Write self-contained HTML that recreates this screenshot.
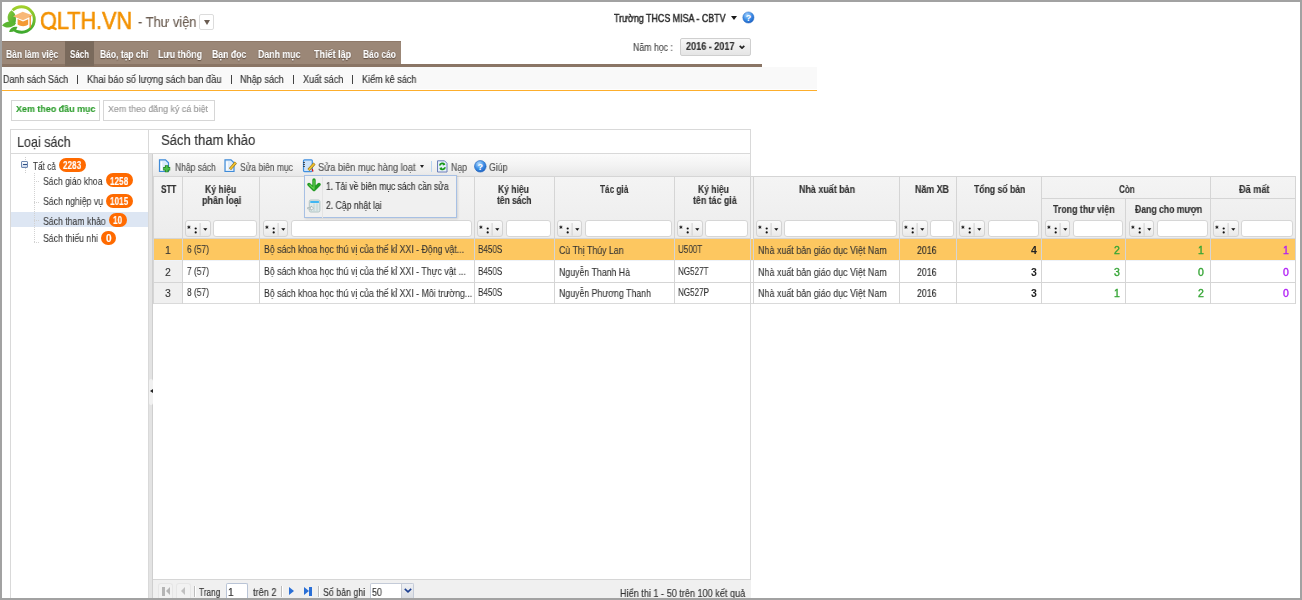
<!DOCTYPE html>
<html><head><meta charset="utf-8">
<style>
*{margin:0;padding:0;box-sizing:border-box}
html,body{width:1302px;height:600px;overflow:hidden;background:#fff}
body{position:relative;font-family:"Liberation Sans",sans-serif;color:#333}
.a{position:absolute;white-space:nowrap}
.t{will-change:transform}
.mi{text-shadow:0 0 1px rgba(60,45,35,.9),0 1px 1px rgba(60,45,35,.6)}
.fb{border:1px solid #d3d3d3;border-radius:3px;background:linear-gradient(#fbfbfb,#f3f3f3 50%,#e9e9e9)}
.fi{border:1px solid #d6d6d6;border-radius:3px;background:#fff}
</style></head><body>
<svg class="a" style="left:0;top:0" width="40" height="40" viewBox="0 0 40 40">
 <defs><linearGradient id="lg" x1="0" y1="0" x2="0" y2="1"><stop offset="0" stop-color="#a2d02c"/><stop offset="1" stop-color="#3ea92e"/></linearGradient>
 <linearGradient id="lf" x1="0" y1="0" x2="1" y2="1"><stop offset="0" stop-color="#8ccc3a"/><stop offset="1" stop-color="#3fa833"/></linearGradient></defs>
 <path d="M12.6 10.3 A12.8 12.8 0 1 1 12.9 29" fill="none" stroke="url(#lg)" stroke-width="2.9"/>
 <path d="M11.5 10.2 C16.5 13.5 17 20 14.5 25.5 C7 24 5 15 11.5 10.2Z" fill="url(#lf)"/>
 <path d="M2 25.5 C5.5 21 11.5 20.5 16 23.5 C12 28.5 6 28.5 2 25.5Z" fill="#5bb632"/>
 <path d="M9 31.8 C10.5 27.5 14 26 17.5 27 C16 31 12.5 32.5 9 31.8Z" fill="#4aac30"/>
 <path d="M13 16.2 L22.7 11.8 L33 15.6 L23 20.2Z" fill="#f8b878"/>
 <path d="M17.6 19 L17.6 24.6 C20.8 26.8 25.6 26.8 28.2 24.6 L28.2 19.2 L23 21.6Z" fill="#f39a34"/>
 <path d="M30.2 16 V27.8" stroke="#f08a1e" stroke-width="1.3"/>
</svg>
<div class="a t " style="left:40.00px;top:9.17px;font-size:24px;line-height:24px;color:#f39200;transform-origin:0 0;transform:scaleX(0.8998);-webkit-text-stroke:0.6px #f39200;">QLTH.VN</div>
<div class="a" style="left:44px;top:30px;width:16px;height:7px;background:#fff"></div>
<svg class="a" style="left:44px;top:22px" width="16" height="10" viewBox="0 0 16 10"><path d="M7.2 5 L11.6 6.9" stroke="#f39200" stroke-width="2.4" stroke-linecap="round"/></svg>
<div class="a t " style="left:138.00px;top:13.88px;font-size:15.5px;line-height:15.5px;color:#6b5d52;transform-origin:0 0;transform:scaleX(0.8299);-webkit-text-stroke:0.15px #6b5d52;">- Thư viện</div>
<div class="a" style="left:199px;top:14px;width:15px;height:16px;border:1px solid #dcdcdc;border-radius:2px;background:#fff"></div>
<div class="a" style="left:203.5px;top:19.5px;width:0;height:0;border-left:3.3px solid transparent;border-right:3.3px solid transparent;border-top:5px solid #6b5d52"></div>
<div class="a t " style="left:614.40px;top:13.03px;font-size:10.5px;line-height:10.5px;color:#2a2a2a;transform-origin:0 0;transform:scaleX(0.8469);-webkit-text-stroke:0.45px #2a2a2a;">Trường THCS MISA - CBTV</div>
<div class="a" style="left:730.6px;top:15.5px;width:0;height:0;border-left:3.1px solid transparent;border-right:3.1px solid transparent;border-top:4px solid #1a1a1a"></div>
<svg class="a" style="left:742px;top:11.3px" width="13" height="13" viewBox="0 0 13 13">
<defs><radialGradient id="hg" cx="0.4" cy="0.3" r="0.7"><stop offset="0" stop-color="#a7d3ff"/><stop offset="0.6" stop-color="#3b8ce6"/><stop offset="1" stop-color="#1e63c4"/></radialGradient></defs>
<circle cx="6.4" cy="6.5" r="5.6" fill="url(#hg)" stroke="#2a6ac0" stroke-width="0.5"/>
<text x="6.5" y="10" text-anchor="middle" font-family="Liberation Sans" font-weight="bold" font-size="9" fill="#fff">?</text></svg>
<div class="a t " style="left:632.60px;top:43.09px;font-size:10px;line-height:10px;color:#444;transform-origin:0 0;transform:scaleX(0.8750);-webkit-text-stroke:0.1px #444;">Năm học :</div>
<div class="a" style="left:679.5px;top:37.5px;width:71.5px;height:18px;border:1px solid #cfcfcf;border-radius:2px;background:linear-gradient(#f8f8f8,#e5e5e5)"></div>
<div class="a t " style="left:686.00px;top:42.46px;font-size:10.3px;line-height:10.3px;font-weight:bold;color:#333;transform-origin:0 0;transform:scaleX(0.8818);-webkit-text-stroke:0.15px #333;">2016 - 2017</div>
<svg class="a" style="left:739px;top:45px" width="6" height="4" viewBox="0 0 6 4"><path d="M0.7 0.8 L3 3.1 L5.3 0.8" fill="none" stroke="#222" stroke-width="1.7"/></svg>
<div class="a" style="left:2px;top:41px;width:399px;height:23px;background:#9b8777;border-top:1px solid #8f7a6a"></div>
<div class="a" style="left:2px;top:64px;width:760px;height:3px;background:#8a7565"></div>
<div class="a" style="left:64.5px;top:41px;width:29.5px;height:25px;background:#7a6a5c"></div>
<div class="a t mi" style="left:5.80px;top:48.79px;font-size:10.8px;line-height:10.8px;font-weight:bold;color:#fff;transform-origin:0 0;transform:scaleX(0.7911);-webkit-text-stroke:0.15px #fff;">Bàn làm việc</div>
<div class="a t mi" style="left:70.00px;top:48.79px;font-size:10.8px;line-height:10.8px;font-weight:bold;color:#fff;transform-origin:0 0;transform:scaleX(0.7361);-webkit-text-stroke:0.15px #fff;">Sách</div>
<div class="a t mi" style="left:99.50px;top:48.79px;font-size:10.8px;line-height:10.8px;font-weight:bold;color:#fff;transform-origin:0 0;transform:scaleX(0.7878);-webkit-text-stroke:0.15px #fff;">Báo, tạp chí</div>
<div class="a t mi" style="left:158.00px;top:48.79px;font-size:10.8px;line-height:10.8px;font-weight:bold;color:#fff;transform-origin:0 0;transform:scaleX(0.8148);-webkit-text-stroke:0.15px #fff;">Lưu thông</div>
<div class="a t mi" style="left:211.50px;top:48.79px;font-size:10.8px;line-height:10.8px;font-weight:bold;color:#fff;transform-origin:0 0;transform:scaleX(0.8037);-webkit-text-stroke:0.15px #fff;">Bạn đọc</div>
<div class="a t mi" style="left:258.00px;top:48.79px;font-size:10.8px;line-height:10.8px;font-weight:bold;color:#fff;transform-origin:0 0;transform:scaleX(0.8128);-webkit-text-stroke:0.15px #fff;">Danh mục</div>
<div class="a t mi" style="left:313.70px;top:48.79px;font-size:10.8px;line-height:10.8px;font-weight:bold;color:#fff;transform-origin:0 0;transform:scaleX(0.8358);-webkit-text-stroke:0.15px #fff;">Thiết lập</div>
<div class="a t mi" style="left:363.00px;top:48.79px;font-size:10.8px;line-height:10.8px;font-weight:bold;color:#fff;transform-origin:0 0;transform:scaleX(0.7807);-webkit-text-stroke:0.15px #fff;">Báo cáo</div>
<div class="a" style="left:3px;top:67px;width:814px;height:21.6px;background:#f9f9f9"></div>
<div class="a" style="left:2px;top:89.8px;width:815px;height:1.3px;background:#fdae2c"></div>
<div class="a t " style="left:2.70px;top:74.80px;font-size:10px;line-height:10px;color:#333;transform-origin:0 0;transform:scaleX(0.8896);-webkit-text-stroke:0.15px #333;">Danh sách Sách</div>
<div class="a t " style="left:86.90px;top:74.80px;font-size:10px;line-height:10px;color:#333;transform-origin:0 0;transform:scaleX(0.9269);-webkit-text-stroke:0.15px #333;">Khai báo số lượng sách ban đầu</div>
<div class="a t " style="left:240.00px;top:74.80px;font-size:10px;line-height:10px;color:#333;transform-origin:0 0;transform:scaleX(0.9142);-webkit-text-stroke:0.15px #333;">Nhập sách</div>
<div class="a t " style="left:302.60px;top:74.80px;font-size:10px;line-height:10px;color:#333;transform-origin:0 0;transform:scaleX(0.9056);-webkit-text-stroke:0.15px #333;">Xuất sách</div>
<div class="a t " style="left:361.60px;top:74.80px;font-size:10px;line-height:10px;color:#333;transform-origin:0 0;transform:scaleX(0.9050);-webkit-text-stroke:0.15px #333;">Kiểm kê sách</div>
<div class="a" style="left:77.2px;top:75px;width:1px;height:9px;background:#444"></div>
<div class="a" style="left:230.5px;top:75px;width:1px;height:9px;background:#444"></div>
<div class="a" style="left:292.9px;top:75px;width:1px;height:9px;background:#444"></div>
<div class="a" style="left:351.6px;top:75px;width:1px;height:9px;background:#444"></div>
<div class="a" style="left:11px;top:100px;width:89px;height:20.5px;border:1px solid #d6d6d6;background:#fff"></div>
<div class="a" style="left:103px;top:100px;width:112px;height:20.5px;border:1px solid #d6d6d6;background:#fff"></div>
<div class="a t " style="left:16.00px;top:104.23px;font-size:9.75px;line-height:9.75px;font-weight:bold;color:#2f9e2f;transform-origin:0 0;transform:scaleX(0.9160);-webkit-text-stroke:0.15px #2f9e2f;">Xem theo đầu mục</div>
<div class="a t " style="left:107.80px;top:104.23px;font-size:9.75px;line-height:9.75px;color:#999;transform-origin:0 0;transform:scaleX(0.9085);-webkit-text-stroke:0.15px #999;">Xem theo đăng ký cá biệt</div>
<div class="a" style="left:10px;top:129px;width:139.5px;height:470px;border:1px solid #d9d9d9;border-bottom:none;background:#fff"></div>
<div class="a" style="left:10px;top:153px;width:139.5px;height:1px;background:#d9d9d9"></div>
<div class="a t " style="left:17.00px;top:133.94px;font-size:15px;line-height:15px;color:#333;transform-origin:0 0;transform:scaleX(0.8364);-webkit-text-stroke:0.15px #333;">Loại sách</div>
<div class="a" style="left:148px;top:129px;width:603px;height:470px;border:1px solid #d9d9d9;border-bottom:none;background:#fff"></div>
<div class="a" style="left:148px;top:153px;width:603px;height:1px;background:#d9d9d9"></div>
<div class="a t " style="left:160.70px;top:131.89px;font-size:15.4px;line-height:15.4px;color:#333;transform-origin:0 0;transform:scaleX(0.8478);-webkit-text-stroke:0.15px #333;">Sách tham khảo</div>
<div class="a" style="left:148.5px;top:154px;width:4.5px;height:444px;background:#e3e3e3;border-right:1px solid #cfcfcf"></div>
<div class="a" style="left:149px;top:379px;width:4px;height:26px;background:#f1f1f1;border-radius:2px"></div>
<div class="a" style="left:150px;top:388.5px;width:0;height:0;border-top:2.5px solid transparent;border-bottom:2.5px solid transparent;border-right:3px solid #222"></div>
<div class="a" style="left:11px;top:211.8px;width:137px;height:15px;background:#dde6f3"></div>
<div class="a" style="left:24.5px;top:157px;width:1px;height:5px;border-left:1px dotted #cfcfcf"></div>
<div class="a" style="left:24.5px;top:168px;width:1px;height:5px;border-left:1px dotted #cfcfcf"></div>
<div class="a" style="left:33.5px;top:173px;width:1px;height:69px;border-left:1px dotted #d2d2d2"></div>
<div class="a" style="left:34px;top:181.2px;width:5px;height:1px;border-top:1px dotted #d2d2d2"></div>
<div class="a" style="left:34px;top:201.5px;width:5px;height:1px;border-top:1px dotted #d2d2d2"></div>
<div class="a" style="left:34px;top:220px;width:5px;height:1px;border-top:1px dotted #d2d2d2"></div>
<div class="a" style="left:34px;top:241.5px;width:5px;height:1px;border-top:1px dotted #d2d2d2"></div>
<div class="a" style="left:21.2px;top:161.2px;width:7.2px;height:7.2px;border:1px solid #6f88b0;border-radius:1px;background:linear-gradient(#fdfdfd,#c9d6ea)"></div>
<div class="a" style="left:23px;top:164.4px;width:3.6px;height:1px;background:#2d4f85"></div>
<div class="a t " style="left:32.50px;top:160.66px;font-size:11px;line-height:11px;color:#3a3a3a;transform-origin:0 0;transform:scaleX(0.7456);-webkit-text-stroke:0.1px #3a3a3a;">Tất cả</div>
<div class="a" style="left:58.7px;top:157.5px;width:27.1px;height:14.2px;background:#ff6a00;border-radius:8px"></div>
<div class="a t " style="left:63.15px;top:160.89px;font-size:10px;line-height:10px;font-weight:bold;color:#fff;transform-origin:0 0;transform:scaleX(0.8198);-webkit-text-stroke:0.15px #fff;">2283</div>
<div class="a t " style="left:43.00px;top:175.96px;font-size:11px;line-height:11px;color:#3a3a3a;transform-origin:0 0;transform:scaleX(0.7839);-webkit-text-stroke:0.1px #3a3a3a;">Sách giáo khoa</div>
<div class="a" style="left:105.8px;top:173.3px;width:27.2px;height:14.2px;background:#ff6a00;border-radius:8px"></div>
<div class="a t " style="left:110.30px;top:176.69px;font-size:10px;line-height:10px;font-weight:bold;color:#fff;transform-origin:0 0;transform:scaleX(0.8198);-webkit-text-stroke:0.15px #fff;">1258</div>
<div class="a t " style="left:43.00px;top:196.26px;font-size:11px;line-height:11px;color:#3a3a3a;transform-origin:0 0;transform:scaleX(0.7917);-webkit-text-stroke:0.1px #3a3a3a;">Sách nghiệp vụ</div>
<div class="a" style="left:105.8px;top:193.5px;width:27.2px;height:14.3px;background:#ff6a00;border-radius:8px"></div>
<div class="a t " style="left:110.30px;top:196.94px;font-size:10px;line-height:10px;font-weight:bold;color:#fff;transform-origin:0 0;transform:scaleX(0.8198);-webkit-text-stroke:0.15px #fff;">1015</div>
<div class="a t " style="left:43.00px;top:215.96px;font-size:11px;line-height:11px;color:#3a3a3a;transform-origin:0 0;transform:scaleX(0.7896);-webkit-text-stroke:0.1px #3a3a3a;">Sách tham khảo</div>
<div class="a" style="left:109px;top:212.5px;width:17.5px;height:14.0px;background:#ff6a00;border-radius:8px"></div>
<div class="a t " style="left:113.20px;top:215.79px;font-size:10px;line-height:10px;font-weight:bold;color:#fff;transform-origin:0 0;transform:scaleX(0.8198);-webkit-text-stroke:0.15px #fff;">10</div>
<div class="a t " style="left:43.00px;top:233.46px;font-size:11px;line-height:11px;color:#3a3a3a;transform-origin:0 0;transform:scaleX(0.7886);-webkit-text-stroke:0.1px #3a3a3a;">Sách thiếu nhi</div>
<div class="a" style="left:101.2px;top:231px;width:14.6px;height:14px;background:#ff6a00;border-radius:8px"></div>
<div class="a t " style="left:106.20px;top:234.29px;font-size:10px;line-height:10px;font-weight:bold;color:#fff;-webkit-text-stroke:0.15px #fff;">0</div>
<div class="a" style="left:153px;top:154px;width:597px;height:22px;background:linear-gradient(#fbfbfb,#f3f3f3 50%,#e8e8e8)"></div>
<svg class="a" style="left:158px;top:159px" width="14" height="14" viewBox="0 0 14 14">
<path d="M1.5 0.8 H7.5 L10.5 3.8 V12.5 H1.5Z" fill="#dcebfa" stroke="#3f8bd8" stroke-width="1.2"/>
<path d="M3.5 2.5 V11" stroke="#fff" stroke-width="1.5"/>
<path d="M8.7 6.2 V13.2 M5.2 9.7 H12.2" stroke="#1d7a1d" stroke-width="3.6"/>
<path d="M8.7 6.6 V12.8 M5.6 9.7 H11.8" stroke="#4cc04c" stroke-width="2"/>
</svg>
<svg class="a" style="left:224px;top:159px" width="14" height="14" viewBox="0 0 14 14">
<path d="M1 0.8 H7 L10 3.8 V12.5 H1Z" fill="#dcebfa" stroke="#3f8bd8" stroke-width="1.2"/>
<path d="M3 2.5 V11" stroke="#fff" stroke-width="1.5"/>
<path d="M11.8 3.5 L6 10.2" stroke="#8a6a10" stroke-width="2.8"/>
<path d="M11.6 3.7 L6.2 10" stroke="#f2c22e" stroke-width="1.8"/>
</svg>
<svg class="a" style="left:302px;top:159px" width="14" height="14" viewBox="0 0 14 14">
<rect x="1.5" y="0.8" width="8.8" height="11.8" rx="1" fill="#cfe4fa" stroke="#3f8fe0" stroke-width="1.2"/>
<path d="M1 3.5 H3 M1 5.5 H3 M1 7.5 H3" stroke="#333" stroke-width="0.8"/>
<path d="M12.5 4.5 L6.5 11" stroke="#8a6a10" stroke-width="2.8"/>
<path d="M12.3 4.7 L6.7 10.8" stroke="#f0c030" stroke-width="1.8"/>
<path d="M10.2 10 L11 12.5" stroke="#e01010" stroke-width="1.2"/>
</svg>
<div class="a" style="left:419.7px;top:165px;width:0;height:0;border-left:2px solid transparent;border-right:2px solid transparent;border-top:3px solid #222"></div>
<div class="a" style="left:431.3px;top:161.2px;width:1px;height:11px;background:#b8d4f0"></div>
<svg class="a" style="left:436px;top:160px" width="13" height="13" viewBox="0 0 13 13">
<path d="M1.5 0.8 H8.5 L11 3.3 V12 H1.5Z" fill="#e6f0fb" stroke="#6c7fb8" stroke-width="1"/>
<path d="M3.8 5.5 C4 3 7.5 2.8 8.5 4.5 M9 7.3 C8.8 9.8 5.3 10 4.3 8.3" fill="none" stroke="#1a9a1a" stroke-width="1.8"/>
<path d="M7 2.5 L9.5 4.8 L6.8 5.5Z M5.8 10.3 L3.3 8 L6 7.3Z" fill="#1a9a1a"/>
</svg>
<svg class="a" style="left:473.5px;top:160px" width="13" height="13" viewBox="0 0 13 13">
<defs><radialGradient id="hg2" cx="0.4" cy="0.3" r="0.75"><stop offset="0" stop-color="#b5dcff"/><stop offset="0.55" stop-color="#3d8fe6"/><stop offset="1" stop-color="#1c5fc0"/></radialGradient></defs>
<circle cx="6.3" cy="6.3" r="5.8" fill="url(#hg2)" stroke="#2262b8" stroke-width="0.6"/>
<text x="6.3" y="9.8" text-anchor="middle" font-family="Liberation Sans" font-weight="bold" font-size="9" fill="#fff">?</text></svg>
<div class="a t " style="left:174.90px;top:162.59px;font-size:10px;line-height:10px;color:#555;transform-origin:0 0;transform:scaleX(0.8536);-webkit-text-stroke:0.15px #555;">Nhập sách</div>
<div class="a t " style="left:239.60px;top:162.59px;font-size:10px;line-height:10px;color:#555;transform-origin:0 0;transform:scaleX(0.8491);-webkit-text-stroke:0.15px #555;">Sửa biên mục</div>
<div class="a t " style="left:317.80px;top:162.59px;font-size:10px;line-height:10px;color:#555;transform-origin:0 0;transform:scaleX(0.9181);-webkit-text-stroke:0.15px #555;">Sửa biên mục hàng loạt</div>
<div class="a t " style="left:451.00px;top:162.59px;font-size:10px;line-height:10px;color:#555;transform-origin:0 0;transform:scaleX(0.8743);-webkit-text-stroke:0.15px #555;">Nạp</div>
<div class="a t " style="left:489.00px;top:162.59px;font-size:10px;line-height:10px;color:#555;transform-origin:0 0;transform:scaleX(0.8768);-webkit-text-stroke:0.15px #555;">Giúp</div>
<div class="a" style="left:153px;top:176px;width:597.5px;height:63px;background:linear-gradient(#f4f4f4,#ececec);border-top:1px solid #d5d5d5;border-bottom:1px solid #d5d5d5"></div>
<div class="a" style="left:750.5px;top:176px;width:3px;height:63px;background:#f2f2f2;border-top:1px solid #d5d5d5"></div>
<div class="a" style="left:753.5px;top:176px;width:542px;height:63px;background:linear-gradient(#f4f4f4,#ececec);border-top:1px solid #d5d5d5;border-bottom:1px solid #d5d5d5"></div>
<div class="a" style="left:153px;top:239px;width:29px;height:64.5px;background:#f0f0f0"></div>
<div class="a" style="left:153px;top:239px;width:1142.5px;height:21.3px;background:#fdc760"></div>
<div class="a" style="left:153px;top:260.3px;width:1142.5px;height:1px;background:#eef2f8"></div>
<div class="a" style="left:153px;top:282px;width:1142.5px;height:1px;background:#d5d5d5"></div>
<div class="a" style="left:153px;top:303.3px;width:1142.5px;height:1.2px;background:#dadada"></div>
<div class="a" style="left:152.5px;top:176px;width:1px;height:127.5px;background:#d5d5d5"></div>
<div class="a" style="left:181.8px;top:176px;width:1px;height:127.5px;background:#d5d5d5"></div>
<div class="a" style="left:259.1px;top:176px;width:1px;height:127.5px;background:#d5d5d5"></div>
<div class="a" style="left:474.0px;top:176px;width:1px;height:127.5px;background:#d5d5d5"></div>
<div class="a" style="left:553.5px;top:176px;width:1px;height:127.5px;background:#d5d5d5"></div>
<div class="a" style="left:673.7px;top:176px;width:1px;height:127.5px;background:#d5d5d5"></div>
<div class="a" style="left:750.0px;top:176px;width:1px;height:127.5px;background:#d5d5d5"></div>
<div class="a" style="left:752.8px;top:176px;width:1px;height:127.5px;background:#d5d5d5"></div>
<div class="a" style="left:898.8px;top:176px;width:1px;height:127.5px;background:#d5d5d5"></div>
<div class="a" style="left:956.0px;top:176px;width:1px;height:127.5px;background:#d5d5d5"></div>
<div class="a" style="left:1041.1px;top:176px;width:1px;height:127.5px;background:#d5d5d5"></div>
<div class="a" style="left:1125.2px;top:198.5px;width:1px;height:105.0px;background:#d5d5d5"></div>
<div class="a" style="left:1209.8px;top:176px;width:1px;height:127.5px;background:#d5d5d5"></div>
<div class="a" style="left:1295.0px;top:176px;width:1px;height:127.5px;background:#d5d5d5"></div>
<div class="a" style="left:1041px;top:198px;width:255px;height:1px;background:#d5d5d5"></div>
<div class="a" style="left:1210px;top:176px;width:86px;height:0px;"></div>
<div class="a fb" style="left:185.20px;top:220px;width:25.5px;height:17.4px"></div>
<svg class="a" style="left:185.20px;top:220px" width="26" height="18" viewBox="0 0 26 18"><path d="M3.9 5.6 V8.8 M2.5 6.4 L5.3 8 M2.5 8 L5.3 6.4" stroke="#222" stroke-width="1"/><circle cx="10.7" cy="8.5" r="1.1" fill="#111"/><circle cx="10.7" cy="12.4" r="1.1" fill="#111"/><path d="M15.1 3 V15.6" stroke="#d0d0d0" stroke-width="1"/><path d="M18.2 8.2 H22.4 L20.3 10.7Z" fill="#111"/></svg>
<div class="a fi" style="left:213.30px;top:220px;width:43.70px;height:17.4px"></div>
<div class="a fb" style="left:262.50px;top:220px;width:25.5px;height:17.4px"></div>
<svg class="a" style="left:262.50px;top:220px" width="26" height="18" viewBox="0 0 26 18"><path d="M3.9 5.6 V8.8 M2.5 6.4 L5.3 8 M2.5 8 L5.3 6.4" stroke="#222" stroke-width="1"/><circle cx="10.7" cy="8.5" r="1.1" fill="#111"/><circle cx="10.7" cy="12.4" r="1.1" fill="#111"/><path d="M15.1 3 V15.6" stroke="#d0d0d0" stroke-width="1"/><path d="M18.2 8.2 H22.4 L20.3 10.7Z" fill="#111"/></svg>
<div class="a fi" style="left:290.60px;top:220px;width:181.30px;height:17.4px"></div>
<div class="a fb" style="left:477.40px;top:220px;width:25.5px;height:17.4px"></div>
<svg class="a" style="left:477.40px;top:220px" width="26" height="18" viewBox="0 0 26 18"><path d="M3.9 5.6 V8.8 M2.5 6.4 L5.3 8 M2.5 8 L5.3 6.4" stroke="#222" stroke-width="1"/><circle cx="10.7" cy="8.5" r="1.1" fill="#111"/><circle cx="10.7" cy="12.4" r="1.1" fill="#111"/><path d="M15.1 3 V15.6" stroke="#d0d0d0" stroke-width="1"/><path d="M18.2 8.2 H22.4 L20.3 10.7Z" fill="#111"/></svg>
<div class="a fi" style="left:505.50px;top:220px;width:45.90px;height:17.4px"></div>
<div class="a fb" style="left:556.90px;top:220px;width:25.5px;height:17.4px"></div>
<svg class="a" style="left:556.90px;top:220px" width="26" height="18" viewBox="0 0 26 18"><path d="M3.9 5.6 V8.8 M2.5 6.4 L5.3 8 M2.5 8 L5.3 6.4" stroke="#222" stroke-width="1"/><circle cx="10.7" cy="8.5" r="1.1" fill="#111"/><circle cx="10.7" cy="12.4" r="1.1" fill="#111"/><path d="M15.1 3 V15.6" stroke="#d0d0d0" stroke-width="1"/><path d="M18.2 8.2 H22.4 L20.3 10.7Z" fill="#111"/></svg>
<div class="a fi" style="left:585.00px;top:220px;width:86.60px;height:17.4px"></div>
<div class="a fb" style="left:677.10px;top:220px;width:25.5px;height:17.4px"></div>
<svg class="a" style="left:677.10px;top:220px" width="26" height="18" viewBox="0 0 26 18"><path d="M3.9 5.6 V8.8 M2.5 6.4 L5.3 8 M2.5 8 L5.3 6.4" stroke="#222" stroke-width="1"/><circle cx="10.7" cy="8.5" r="1.1" fill="#111"/><circle cx="10.7" cy="12.4" r="1.1" fill="#111"/><path d="M15.1 3 V15.6" stroke="#d0d0d0" stroke-width="1"/><path d="M18.2 8.2 H22.4 L20.3 10.7Z" fill="#111"/></svg>
<div class="a fi" style="left:705.20px;top:220px;width:42.70px;height:17.4px"></div>
<div class="a fb" style="left:756.20px;top:220px;width:25.5px;height:17.4px"></div>
<svg class="a" style="left:756.20px;top:220px" width="26" height="18" viewBox="0 0 26 18"><path d="M3.9 5.6 V8.8 M2.5 6.4 L5.3 8 M2.5 8 L5.3 6.4" stroke="#222" stroke-width="1"/><circle cx="10.7" cy="8.5" r="1.1" fill="#111"/><circle cx="10.7" cy="12.4" r="1.1" fill="#111"/><path d="M15.1 3 V15.6" stroke="#d0d0d0" stroke-width="1"/><path d="M18.2 8.2 H22.4 L20.3 10.7Z" fill="#111"/></svg>
<div class="a fi" style="left:784.30px;top:220px;width:112.40px;height:17.4px"></div>
<div class="a fb" style="left:902.20px;top:220px;width:25.5px;height:17.4px"></div>
<svg class="a" style="left:902.20px;top:220px" width="26" height="18" viewBox="0 0 26 18"><path d="M3.9 5.6 V8.8 M2.5 6.4 L5.3 8 M2.5 8 L5.3 6.4" stroke="#222" stroke-width="1"/><circle cx="10.7" cy="8.5" r="1.1" fill="#111"/><circle cx="10.7" cy="12.4" r="1.1" fill="#111"/><path d="M15.1 3 V15.6" stroke="#d0d0d0" stroke-width="1"/><path d="M18.2 8.2 H22.4 L20.3 10.7Z" fill="#111"/></svg>
<div class="a fi" style="left:930.30px;top:220px;width:23.60px;height:17.4px"></div>
<div class="a fb" style="left:959.40px;top:220px;width:25.5px;height:17.4px"></div>
<svg class="a" style="left:959.40px;top:220px" width="26" height="18" viewBox="0 0 26 18"><path d="M3.9 5.6 V8.8 M2.5 6.4 L5.3 8 M2.5 8 L5.3 6.4" stroke="#222" stroke-width="1"/><circle cx="10.7" cy="8.5" r="1.1" fill="#111"/><circle cx="10.7" cy="12.4" r="1.1" fill="#111"/><path d="M15.1 3 V15.6" stroke="#d0d0d0" stroke-width="1"/><path d="M18.2 8.2 H22.4 L20.3 10.7Z" fill="#111"/></svg>
<div class="a fi" style="left:987.50px;top:220px;width:51.50px;height:17.4px"></div>
<div class="a fb" style="left:1044.50px;top:220px;width:25.5px;height:17.4px"></div>
<svg class="a" style="left:1044.50px;top:220px" width="26" height="18" viewBox="0 0 26 18"><path d="M3.9 5.6 V8.8 M2.5 6.4 L5.3 8 M2.5 8 L5.3 6.4" stroke="#222" stroke-width="1"/><circle cx="10.7" cy="8.5" r="1.1" fill="#111"/><circle cx="10.7" cy="12.4" r="1.1" fill="#111"/><path d="M15.1 3 V15.6" stroke="#d0d0d0" stroke-width="1"/><path d="M18.2 8.2 H22.4 L20.3 10.7Z" fill="#111"/></svg>
<div class="a fi" style="left:1072.60px;top:220px;width:50.50px;height:17.4px"></div>
<div class="a fb" style="left:1128.60px;top:220px;width:25.5px;height:17.4px"></div>
<svg class="a" style="left:1128.60px;top:220px" width="26" height="18" viewBox="0 0 26 18"><path d="M3.9 5.6 V8.8 M2.5 6.4 L5.3 8 M2.5 8 L5.3 6.4" stroke="#222" stroke-width="1"/><circle cx="10.7" cy="8.5" r="1.1" fill="#111"/><circle cx="10.7" cy="12.4" r="1.1" fill="#111"/><path d="M15.1 3 V15.6" stroke="#d0d0d0" stroke-width="1"/><path d="M18.2 8.2 H22.4 L20.3 10.7Z" fill="#111"/></svg>
<div class="a fi" style="left:1156.70px;top:220px;width:51.00px;height:17.4px"></div>
<div class="a fb" style="left:1213.20px;top:220px;width:25.5px;height:17.4px"></div>
<svg class="a" style="left:1213.20px;top:220px" width="26" height="18" viewBox="0 0 26 18"><path d="M3.9 5.6 V8.8 M2.5 6.4 L5.3 8 M2.5 8 L5.3 6.4" stroke="#222" stroke-width="1"/><circle cx="10.7" cy="8.5" r="1.1" fill="#111"/><circle cx="10.7" cy="12.4" r="1.1" fill="#111"/><path d="M15.1 3 V15.6" stroke="#d0d0d0" stroke-width="1"/><path d="M18.2 8.2 H22.4 L20.3 10.7Z" fill="#111"/></svg>
<div class="a fi" style="left:1241.30px;top:220px;width:51.60px;height:17.4px"></div>
<div class="a t " style="left:160.50px;top:184.59px;font-size:10px;line-height:10px;font-weight:bold;color:#333;transform-origin:0 0;transform:scaleX(0.8095);-webkit-text-stroke:0.15px #333;">STT</div>
<div class="a t " style="left:204.50px;top:184.59px;font-size:10px;line-height:10px;font-weight:bold;color:#333;transform-origin:0 0;transform:scaleX(0.8643);-webkit-text-stroke:0.15px #333;">Ký hiệu</div>
<div class="a t " style="left:202.00px;top:195.90px;font-size:10px;line-height:10px;font-weight:bold;color:#333;transform-origin:0 0;transform:scaleX(0.8952);-webkit-text-stroke:0.15px #333;">phân loại</div>
<div class="a t " style="left:497.60px;top:184.90px;font-size:10px;line-height:10px;font-weight:bold;color:#333;transform-origin:0 0;transform:scaleX(0.8532);-webkit-text-stroke:0.15px #333;">Ký hiệu</div>
<div class="a t " style="left:497.20px;top:195.90px;font-size:10px;line-height:10px;font-weight:bold;color:#333;transform-origin:0 0;transform:scaleX(0.8473);-webkit-text-stroke:0.15px #333;">tên sách</div>
<div class="a t " style="left:600.00px;top:184.90px;font-size:10px;line-height:10px;font-weight:bold;color:#333;transform-origin:0 0;transform:scaleX(0.8208);-webkit-text-stroke:0.15px #333;">Tác giả</div>
<div class="a t " style="left:697.60px;top:184.90px;font-size:10px;line-height:10px;font-weight:bold;color:#333;transform-origin:0 0;transform:scaleX(0.8532);-webkit-text-stroke:0.15px #333;">Ký hiệu</div>
<div class="a t " style="left:692.50px;top:195.90px;font-size:10px;line-height:10px;font-weight:bold;color:#333;transform-origin:0 0;transform:scaleX(0.8831);-webkit-text-stroke:0.15px #333;">tên tác giả</div>
<div class="a t " style="left:798.80px;top:184.90px;font-size:10px;line-height:10px;font-weight:bold;color:#333;transform-origin:0 0;transform:scaleX(0.8917);-webkit-text-stroke:0.15px #333;">Nhà xuất bản</div>
<div class="a t " style="left:914.70px;top:184.90px;font-size:10px;line-height:10px;font-weight:bold;color:#333;transform-origin:0 0;transform:scaleX(0.8851);-webkit-text-stroke:0.15px #333;">Năm XB</div>
<div class="a t " style="left:974.00px;top:184.90px;font-size:10px;line-height:10px;font-weight:bold;color:#333;transform-origin:0 0;transform:scaleX(0.8636);-webkit-text-stroke:0.15px #333;">Tổng số bản</div>
<div class="a t " style="left:1118.50px;top:184.59px;font-size:10px;line-height:10px;font-weight:bold;color:#333;transform-origin:0 0;transform:scaleX(0.8093);-webkit-text-stroke:0.15px #333;">Còn</div>
<div class="a t " style="left:1053.20px;top:205.40px;font-size:10px;line-height:10px;font-weight:bold;color:#333;transform-origin:0 0;transform:scaleX(0.8786);-webkit-text-stroke:0.15px #333;">Trong thư viện</div>
<div class="a t " style="left:1135.20px;top:205.40px;font-size:10px;line-height:10px;font-weight:bold;color:#333;transform-origin:0 0;transform:scaleX(0.8649);-webkit-text-stroke:0.15px #333;">Đang cho mượn</div>
<div class="a t " style="left:1238.60px;top:184.90px;font-size:10px;line-height:10px;font-weight:bold;color:#333;transform-origin:0 0;transform:scaleX(0.9129);-webkit-text-stroke:0.15px #333;">Đã mất</div>
<div class="a t " style="left:165.04px;top:244.73px;font-size:10.5px;line-height:10.5px;color:#333;-webkit-text-stroke:0.1px #333;">1</div>
<div class="a t " style="left:186.50px;top:243.83px;font-size:10.5px;line-height:10.5px;color:#333;transform-origin:0 0;transform:scaleX(0.7982);-webkit-text-stroke:0.1px #333;">6 (57)</div>
<div class="a t " style="left:263.80px;top:244.33px;font-size:10.5px;line-height:10.5px;color:#333;transform-origin:0 0;transform:scaleX(0.8358);-webkit-text-stroke:0.1px #333;">Bộ sách khoa học thú vị của thế kỉ XXI - Động vật...</div>
<div class="a t " style="left:478.40px;top:243.83px;font-size:10.5px;line-height:10.5px;color:#333;transform-origin:0 0;transform:scaleX(0.7689);-webkit-text-stroke:0.1px #333;">B450S</div>
<div class="a t " style="left:559.00px;top:244.73px;font-size:10.5px;line-height:10.5px;color:#333;transform-origin:0 0;transform:scaleX(0.8358);-webkit-text-stroke:0.1px #333;">Cù Thị Thúy Lan</div>
<div class="a t " style="left:677.80px;top:243.83px;font-size:10.5px;line-height:10.5px;color:#333;transform-origin:0 0;transform:scaleX(0.7689);-webkit-text-stroke:0.1px #333;">U500T</div>
<div class="a t " style="left:757.70px;top:244.73px;font-size:10.5px;line-height:10.5px;color:#333;transform-origin:0 0;transform:scaleX(0.8525);-webkit-text-stroke:0.1px #333;">Nhà xuất bản giáo dục Việt Nam</div>
<div class="a t " style="left:916.86px;top:244.73px;font-size:10.5px;line-height:10.5px;color:#2a2a2a;transform-origin:0 0;transform:scaleX(0.8358);-webkit-text-stroke:0.15px #2a2a2a;">2016</div>
<div class="a t " style="left:1031.39px;top:244.73px;font-size:10.5px;line-height:10.5px;font-weight:bold;color:#222;">4</div>
<div class="a t " style="left:1114.29px;top:244.73px;font-size:10.5px;line-height:10.5px;color:#35a535;-webkit-text-stroke:0.35px #35a535;">2</div>
<div class="a t " style="left:1198.29px;top:244.73px;font-size:10.5px;line-height:10.5px;color:#35a535;-webkit-text-stroke:0.35px #35a535;">1</div>
<div class="a t " style="left:1283.29px;top:244.73px;font-size:10.5px;line-height:10.5px;color:#b01ef5;-webkit-text-stroke:0.35px #b01ef5;">1</div>
<div class="a t " style="left:165.04px;top:266.83px;font-size:10.5px;line-height:10.5px;color:#333;-webkit-text-stroke:0.1px #333;">2</div>
<div class="a t " style="left:186.50px;top:265.93px;font-size:10.5px;line-height:10.5px;color:#333;transform-origin:0 0;transform:scaleX(0.7982);-webkit-text-stroke:0.1px #333;">7 (57)</div>
<div class="a t " style="left:263.80px;top:266.43px;font-size:10.5px;line-height:10.5px;color:#333;transform-origin:0 0;transform:scaleX(0.8358);-webkit-text-stroke:0.1px #333;">Bộ sách khoa học thú vị của thế kỉ XXI - Thực vật ...</div>
<div class="a t " style="left:478.40px;top:265.93px;font-size:10.5px;line-height:10.5px;color:#333;transform-origin:0 0;transform:scaleX(0.7689);-webkit-text-stroke:0.1px #333;">B450S</div>
<div class="a t " style="left:559.00px;top:266.83px;font-size:10.5px;line-height:10.5px;color:#333;transform-origin:0 0;transform:scaleX(0.8358);-webkit-text-stroke:0.1px #333;">Nguyễn Thanh Hà</div>
<div class="a t " style="left:677.80px;top:265.93px;font-size:10.5px;line-height:10.5px;color:#333;transform-origin:0 0;transform:scaleX(0.7689);-webkit-text-stroke:0.1px #333;">NG527T</div>
<div class="a t " style="left:757.70px;top:266.83px;font-size:10.5px;line-height:10.5px;color:#333;transform-origin:0 0;transform:scaleX(0.8525);-webkit-text-stroke:0.1px #333;">Nhà xuất bản giáo dục Việt Nam</div>
<div class="a t " style="left:916.86px;top:266.83px;font-size:10.5px;line-height:10.5px;color:#2a2a2a;transform-origin:0 0;transform:scaleX(0.8358);-webkit-text-stroke:0.15px #2a2a2a;">2016</div>
<div class="a t " style="left:1031.39px;top:266.83px;font-size:10.5px;line-height:10.5px;font-weight:bold;color:#222;">3</div>
<div class="a t " style="left:1114.29px;top:266.83px;font-size:10.5px;line-height:10.5px;color:#35a535;-webkit-text-stroke:0.35px #35a535;">3</div>
<div class="a t " style="left:1198.29px;top:266.83px;font-size:10.5px;line-height:10.5px;color:#35a535;-webkit-text-stroke:0.35px #35a535;">0</div>
<div class="a t " style="left:1283.29px;top:266.83px;font-size:10.5px;line-height:10.5px;color:#b01ef5;-webkit-text-stroke:0.35px #b01ef5;">0</div>
<div class="a t " style="left:165.04px;top:288.33px;font-size:10.5px;line-height:10.5px;color:#333;-webkit-text-stroke:0.1px #333;">3</div>
<div class="a t " style="left:186.50px;top:287.43px;font-size:10.5px;line-height:10.5px;color:#333;transform-origin:0 0;transform:scaleX(0.7982);-webkit-text-stroke:0.1px #333;">8 (57)</div>
<div class="a t " style="left:263.80px;top:287.93px;font-size:10.5px;line-height:10.5px;color:#333;transform-origin:0 0;transform:scaleX(0.8358);-webkit-text-stroke:0.1px #333;">Bộ sách khoa học thú vị của thế kỉ XXI - Môi trường...</div>
<div class="a t " style="left:478.40px;top:287.43px;font-size:10.5px;line-height:10.5px;color:#333;transform-origin:0 0;transform:scaleX(0.7689);-webkit-text-stroke:0.1px #333;">B450S</div>
<div class="a t " style="left:559.00px;top:288.33px;font-size:10.5px;line-height:10.5px;color:#333;transform-origin:0 0;transform:scaleX(0.8358);-webkit-text-stroke:0.1px #333;">Nguyễn Phương Thanh</div>
<div class="a t " style="left:677.80px;top:287.43px;font-size:10.5px;line-height:10.5px;color:#333;transform-origin:0 0;transform:scaleX(0.7689);-webkit-text-stroke:0.1px #333;">NG527P</div>
<div class="a t " style="left:758.30px;top:288.33px;font-size:10.5px;line-height:10.5px;color:#333;transform-origin:0 0;transform:scaleX(0.8525);-webkit-text-stroke:0.1px #333;">Nhà xuất bản giáo dục Việt Nam</div>
<div class="a t " style="left:916.86px;top:288.33px;font-size:10.5px;line-height:10.5px;color:#2a2a2a;transform-origin:0 0;transform:scaleX(0.8358);-webkit-text-stroke:0.15px #2a2a2a;">2016</div>
<div class="a t " style="left:1031.39px;top:288.33px;font-size:10.5px;line-height:10.5px;font-weight:bold;color:#222;">3</div>
<div class="a t " style="left:1114.29px;top:288.33px;font-size:10.5px;line-height:10.5px;color:#35a535;-webkit-text-stroke:0.35px #35a535;">1</div>
<div class="a t " style="left:1198.29px;top:288.33px;font-size:10.5px;line-height:10.5px;color:#35a535;-webkit-text-stroke:0.35px #35a535;">2</div>
<div class="a t " style="left:1283.29px;top:288.33px;font-size:10.5px;line-height:10.5px;color:#b01ef5;-webkit-text-stroke:0.35px #b01ef5;">0</div>
<div class="a" style="left:304.3px;top:175.3px;width:152.5px;height:43px;background:#f0f0f0;border:1px solid #a7c0e4;box-shadow:1px 1px 2px rgba(0,0,0,.12)"></div>
<div class="a" style="left:322px;top:176.5px;width:1px;height:41px;background:#e4e4e4"></div>
<svg class="a" style="left:307px;top:178px" width="14" height="14" viewBox="0 0 14 14">
<path d="M7 2 V11.5 M2 6.5 L7 11.5 L12 6.5" fill="none" stroke="#239a23" stroke-width="3.4" stroke-linecap="round" stroke-linejoin="round"/>
<path d="M7 2.5 V10.5 M2.8 7 L7 11" fill="none" stroke="#62d04e" stroke-width="1.2" stroke-linecap="round"/>
</svg>
<svg class="a" style="left:307px;top:198.5px" width="14" height="14" viewBox="0 0 14 14">
<rect x="2.3" y="1" width="10.6" height="12" rx="1.5" fill="#dde9e9" stroke="#adbfbf" stroke-width="0.9"/>
<rect x="3.3" y="2" width="8.6" height="2" fill="#3fb6f2"/>
<path d="M7 4.5 V12 M10 4.5 V12" stroke="#b9cccc" stroke-width="0.8"/>
<path d="M0.6 8.6 H4 V7 L6.6 9.2 L4 11.4 V9.8 H0.6Z" fill="#fff" stroke="#98a8a8" stroke-width="0.7"/>
</svg>
<div class="a t " style="left:326.30px;top:182.00px;font-size:10px;line-height:10px;color:#333;transform-origin:0 0;transform:scaleX(0.8497);-webkit-text-stroke:0.15px #333;">1. Tải về biên mục sách cần sửa</div>
<div class="a t " style="left:326.30px;top:201.40px;font-size:10px;line-height:10px;color:#333;transform-origin:0 0;transform:scaleX(0.8636);-webkit-text-stroke:0.15px #333;">2. Cập nhật lại</div>
<div class="a" style="left:153px;top:579px;width:597.5px;height:20px;background:#f0f0f0;border-top:1px solid #d6d6d6"></div>
<div class="a" style="left:158.4px;top:583px;width:14.8px;height:16px;border:1px solid #e6e6e6;border-bottom:none;border-radius:3px 3px 0 0;background:#f2f2f2"></div>
<div class="a" style="left:176.4px;top:583px;width:14.8px;height:16px;border:1px solid #e6e6e6;border-bottom:none;border-radius:3px 3px 0 0;background:#f2f2f2"></div>
<div class="a" style="left:162.2px;top:586.8px;width:2.4px;height:9px;background:#b5b5b5"></div>
<div class="a" style="left:165.6px;top:586.8px;width:0;height:0;border-top:4.5px solid transparent;border-bottom:4.5px solid transparent;border-right:4.2px solid #b5b5b5"></div>
<div class="a" style="left:181px;top:587px;width:0;height:0;border-top:4.3px solid transparent;border-bottom:4.3px solid transparent;border-right:4.4px solid #c0c0c0"></div>
<div class="a" style="left:193.7px;top:586px;width:1px;height:10.5px;background:#bdbdbd;box-shadow:1px 0 0 #fff"></div>
<div class="a" style="left:281.0px;top:586px;width:1px;height:10.5px;background:#bdbdbd;box-shadow:1px 0 0 #fff"></div>
<div class="a" style="left:318.1px;top:586px;width:1px;height:10.5px;background:#bdbdbd;box-shadow:1px 0 0 #fff"></div>
<div class="a t " style="left:199.10px;top:587.76px;font-size:10.3px;line-height:10.3px;color:#333;transform-origin:0 0;transform:scaleX(0.8053);-webkit-text-stroke:0.15px #333;">Trang</div>
<div class="a" style="left:225.6px;top:582.7px;width:22px;height:17px;border:1px solid #b9c4d6;border-bottom:none;border-radius:2px 2px 0 0;background:#fff"></div>
<div class="a t " style="left:228.20px;top:587.76px;font-size:10.3px;line-height:10.3px;color:#333;-webkit-text-stroke:0.15px #333;">1</div>
<div class="a t " style="left:252.70px;top:587.76px;font-size:10.3px;line-height:10.3px;color:#333;transform-origin:0 0;transform:scaleX(0.8950);-webkit-text-stroke:0.15px #333;">trên 2</div>
<div class="a" style="left:288.6px;top:586.8px;width:0;height:0;border-top:4.5px solid transparent;border-bottom:4.5px solid transparent;border-left:5.2px solid #2a6fd6"></div>
<div class="a" style="left:303.6px;top:586.8px;width:0;height:0;border-top:4.5px solid transparent;border-bottom:4.5px solid transparent;border-left:5.2px solid #2a6fd6"></div>
<div class="a" style="left:309.3px;top:586.8px;width:2.4px;height:9px;background:#2a6fd6"></div>
<div class="a t " style="left:322.90px;top:587.76px;font-size:10.3px;line-height:10.3px;color:#333;transform-origin:0 0;transform:scaleX(0.8551);-webkit-text-stroke:0.15px #333;">Số bản ghi</div>
<div class="a" style="left:369.9px;top:582.7px;width:44px;height:17px;border:1px solid #c4cbd8;border-bottom:none;border-radius:2px 2px 0 0;background:#fff"></div>
<div class="a" style="left:401px;top:583.5px;width:12.2px;height:16px;background:linear-gradient(#eef0f4,#d8dbe0);border-left:1px solid #c8ccd4"></div>
<svg class="a" style="left:403.5px;top:588px" width="8" height="5" viewBox="0 0 8 5"><path d="M0.8 0.8 L4 3.8 L7.2 0.8" fill="none" stroke="#1b3f91" stroke-width="1.6"/></svg>
<div class="a t " style="left:372.20px;top:587.76px;font-size:10.3px;line-height:10.3px;color:#333;transform-origin:0 0;transform:scaleX(0.8572);-webkit-text-stroke:0.15px #333;">50</div>
<div class="a t " style="left:620.00px;top:588.96px;font-size:10.3px;line-height:10.3px;color:#333;transform-origin:0 0;transform:scaleX(0.8853);-webkit-text-stroke:0.15px #333;">Hiển thị 1 - 50 trên 100 kết quả</div>
<div class="a" style="left:0;top:0;width:1302px;height:600px;border:2px solid #a2a2a2;z-index:50"></div>
</body></html>
